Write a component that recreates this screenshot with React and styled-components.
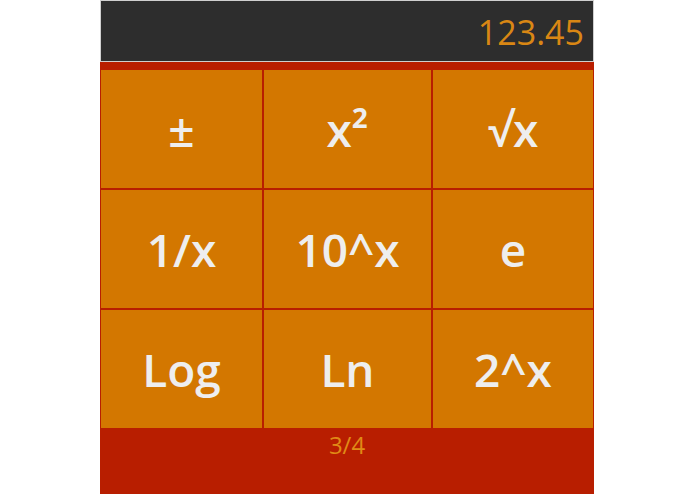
import React from "react";
import styled, { createGlobalStyle } from "styled-components";

const Global = createGlobalStyle`
  html, body {
    margin: 0;
    padding: 0;
    background: #ffffff;
    font-family: "Open Sans", "Noto Sans", sans-serif;
  }
`;

const Calc = styled.div`
  width: 494px;
  height: 494px;
  margin-left: 100px;
  background: #b81e00;
  display: flex;
  flex-direction: column;
`;

const Display = styled.div`
  height: 60px;
  background: #2d2d2d;
  border: 1px solid #cfcfcf;
  box-sizing: content-box;
  width: 492px;
  display: flex;
  align-items: center;
  justify-content: flex-end;
  color: #d98714;
  font-size: 34px;
`;

const Value = styled.span`
  margin-right: 9px;
  margin-top: 1px;
`;

const Pad = styled.div`
  margin-top: 8px;
  padding: 0 1px;
  display: grid;
  grid-template-columns: 161px 167px 160px;
  grid-auto-rows: 118px;
  gap: 2px;
`;

const Key = styled.button`
  border: none;
  margin: 0;
  padding: 0;
  background: #d37700;
  color: #eeeeee;
  font-family: "Open Sans", "Noto Sans", sans-serif;
  font-size: 46px;
  font-weight: 600;
  display: flex;
  align-items: center;
  justify-content: center;
  cursor: pointer;
`;

const Pager = styled.div`
  text-align: center;
  color: #e08a16;
  font-size: 24px;
  line-height: 33px;
`;

const keys = ["±", "x²", "√x", "1/x", "10^x", "e", "Log", "Ln", "2^x"];

export default function App() {
  return (
    <Calc>
      <Global />
      <Display>
        <Value>123.45</Value>
      </Display>
      <Pad>
        {keys.map((k) => (
          <Key key={k}>{k}</Key>
        ))}
      </Pad>
      <Pager>3/4</Pager>
    </Calc>
  );
}
